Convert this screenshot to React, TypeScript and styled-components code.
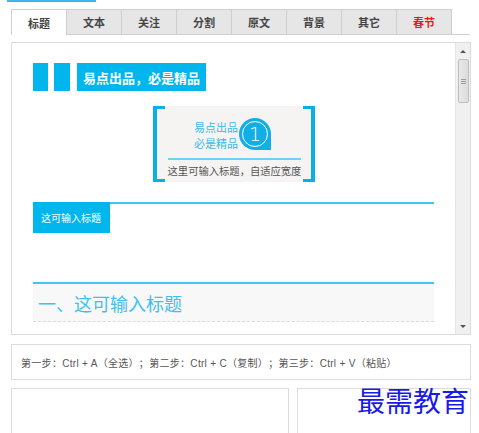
import React from "react";
import styled, { createGlobalStyle } from "styled-components";

const Global = createGlobalStyle`
  html, body { margin: 0; padding: 0; background: #fff; }
  body { font-family: "Noto Sans CJK SC", "Noto Sans", sans-serif; text-spacing-trim: space-all; }
  * { box-sizing: border-box; }
`;

const Page = styled.div`
  position: relative;
  width: 479px;
  height: 433px;
  overflow: hidden;
`;

const TopLine = styled.div`
  margin-left: 7px;
  width: 89px;
  height: 2px;
  background: #3cb6ec;
`;

const Main = styled.div`
  margin-left: 11px;
  width: 460px;
`;

const TabBar = styled.div`
  margin-top: 7px;
  width: 459px;
  height: 26px;
  display: flex;
  border-bottom: 1px solid #cfcfcf;
`;

const Tab = styled.div<{ $active?: boolean; $red?: boolean }>`
  width: 56px;
  height: ${(p) => (p.$active ? "26px" : "25px")};
  margin-right: -1px;
  border: 1px solid #cfcfcf;
  border-bottom: none;
  background: ${(p) => (p.$active ? "#fff" : "#e6e6e6")};
  display: flex;
  align-items: center;
  justify-content: center;
  font-size: 11px;
  font-weight: bold;
  color: ${(p) => (p.$red ? "#e8191c" : "#444")};
  position: relative;
  z-index: ${(p) => (p.$active ? 1 : 0)};
`;

const Panel = styled.div`
  margin-top: 7px;
  height: 293px;
  border: 1px solid #dcdcdc;
  display: flex;
`;

const Content = styled.div`
  flex: 1;
  padding: 20px 21px 0 21px;
  overflow: hidden;
`;

const Scrollbar = styled.div`
  width: 15px;
  background: #f0f0f0;
  border-left: 1px solid #e4e4e4;
  display: flex;
  flex-direction: column;
  align-items: center;
  padding: 2px 0;
`;

const Arrow = styled.div<{ $down?: boolean }>`
  height: 12px;
  display: flex;
  align-items: center;
  justify-content: center;
  &::before {
    content: "";
    border-left: 3px solid transparent;
    border-right: 3px solid transparent;
    ${(p) => (p.$down ? "border-top: 3px solid #555;" : "border-bottom: 3px solid #555;")}
  }
`;

const Thumb = styled.div`
  width: 11px;
  height: 44px;
  margin-top: 2px;
  border: 1px solid #bdbdbd;
  border-radius: 2px;
  background: linear-gradient(to right, #e9e9e9, #dcdcdc);
  display: flex;
  flex-direction: column;
  align-items: center;
  justify-content: center;
  gap: 1px;
  & > i {
    display: block;
    width: 5px;
    height: 1px;
    background: #999;
  }
`;

const Spacer = styled.div`
  flex: 1;
`;

const BlockHeader = styled.div`
  display: flex;
  height: 28px;
`;

const Block = styled.div<{ $w: number; $mr: number }>`
  width: ${(p) => p.$w}px;
  margin-right: ${(p) => p.$mr}px;
  background: #00b6ec;
`;

const Label = styled.div`
  width: 129px;
  background: #00b6ec;
  color: #fff;
  font-size: 13px;
  font-weight: bold;
  display: flex;
  align-items: center;
  justify-content: center;
`;

const CardWrap = styled.div`
  display: flex;
  justify-content: center;
  margin-top: 15px;
`;

const Card = styled.div`
  position: relative;
  width: 162px;
  height: 76px;
  padding: 0 4px;
  &::before,
  &::after {
    content: "";
    position: absolute;
    top: 0;
    bottom: 0;
    width: 8px;
    border-top: 3px solid #0aaee8;
    border-bottom: 3px solid #0aaee8;
  }
  &::before {
    left: 0;
    border-left: 4px solid #0aaee8;
  }
  &::after {
    right: 0;
    border-right: 4px solid #0aaee8;
  }
`;

const CardBody = styled.div`
  height: 100%;
  background: #f5f4f2;
  display: flex;
  flex-direction: column;
  align-items: center;
  padding-top: 11px;
`;

const CardTop = styled.div`
  display: flex;
  align-items: center;
  gap: 1px;
  margin-left: -2px;
`;

const CardLines = styled.div`
  display: flex;
  flex-direction: column;
  align-items: flex-end;
  color: #3bbbe9;
  font-size: 11px;
  line-height: 16px;
  margin-top: 2px;
`;

const Bubble = styled.div`
  width: 32px;
  height: 32px;
  border-radius: 16px 16px 0 16px;
  background: #12afe6;
  display: flex;
  align-items: center;
  justify-content: center;
`;

const Ring = styled.div`
  width: 26px;
  height: 26px;
  border-radius: 50%;
  border: 1.5px solid #fff;
  color: #fff;
  font-family: "DejaVu Sans", sans-serif;
  font-weight: 300;
  font-size: 19px;
  display: flex;
  align-items: center;
  justify-content: center;
  line-height: 1;
`;

const CardRule = styled.div`
  width: 133px;
  height: 2px;
  margin-top: 7px;
  margin-left: 1px;
  background: #6cd3f5;
`;

const CardSub = styled.div`
  margin-top: 4px;
  font-size: 10.3px;
  line-height: 14px;
  color: #555;
  margin-left: 2px;
`;

const Section = styled.div<{ $mt: number }>`
  margin-top: ${(p) => p.$mt}px;
  border-top: 2px solid #3cc6f3;
`;

const TagBox = styled.div`
  margin-top: -2px;
  width: 77px;
  height: 31px;
  background: #00b6ec;
  color: #fff;
  font-size: 10px;
  display: flex;
  align-items: center;
  padding-left: 8px;
`;

const BigTitle = styled.div`
  height: 38px;
  background: #f8f8f8;
  border-bottom: 1px dashed #dcdcdc;
  color: #3ec1f0;
  font-size: 18px;
  display: flex;
  align-items: center;
  padding-left: 5px;
`;

const Steps = styled.div`
  margin-top: 9px;
  height: 36px;
  border: 1px solid #dcdcdc;
  display: flex;
  align-items: center;
  padding-left: 9px;
  font-family: "Liberation Sans", "Noto Sans CJK SC", sans-serif;
  font-size: 10px;
  letter-spacing: 0.3px;
  color: #555;
  white-space: pre;
`;

const BottomRow = styled.div`
  margin-top: 8px;
  display: flex;
  gap: 8px;
`;

const BottomBox = styled.div<{ $w: number }>`
  width: ${(p) => p.$w}px;
  height: 60px;
  border: 1px solid #dcdcdc;
  border-bottom: none;
`;

const Watermark = styled.div`
  position: absolute;
  left: 357px;
  top: 384px;
  font-size: 28px;
  color: #1a1ae6;
  font-family: "Noto Sans CJK SC", serif;
  font-weight: 400;
  line-height: 1.2;
`;

const tabs = ["标题", "文本", "关注", "分割", "原文", "背景", "其它", "春节"];

export default function App() {
  return (
    <Page>
      <Global />
      <TopLine />
      <Main>
        <TabBar>
          {tabs.map((t, i) => (
            <Tab key={t} $active={i === 0} $red={t === "春节"}>
              {t}
            </Tab>
          ))}
        </TabBar>
        <Panel>
          <Content>
            <BlockHeader>
              <Block $w={15} $mr={6} />
              <Block $w={16} $mr={7} />
              <Label>易点出品，必是精品</Label>
            </BlockHeader>
            <CardWrap>
              <Card>
                <CardBody>
                  <CardTop>
                    <CardLines>
                      <span>易点出品</span>
                      <span>必是精品</span>
                    </CardLines>
                    <Bubble>
                      <Ring>1</Ring>
                    </Bubble>
                  </CardTop>
                  <CardRule />
                  <CardSub>这里可输入标题，自适应宽度</CardSub>
                </CardBody>
              </Card>
            </CardWrap>
            <Section $mt={20}>
              <TagBox>这可输入标题</TagBox>
            </Section>
            <Section $mt={49}>
              <BigTitle>一、这可输入标题</BigTitle>
            </Section>
          </Content>
          <Scrollbar>
            <Arrow />
            <Thumb>
              <i />
              <i />
              <i />
            </Thumb>
            <Spacer />
            <Arrow $down />
          </Scrollbar>
        </Panel>
        <Steps>第一步：Ctrl + A（全选）；第二步：Ctrl + C（复制）；第三步：Ctrl + V（粘贴）</Steps>
        <BottomRow>
          <BottomBox $w={278} />
          <BottomBox $w={174} />
        </BottomRow>
      </Main>
      <Watermark>最需教育</Watermark>
    </Page>
  );
}
